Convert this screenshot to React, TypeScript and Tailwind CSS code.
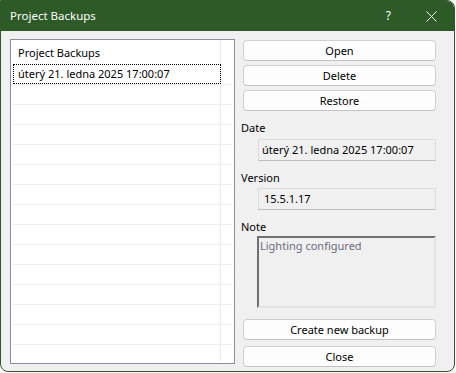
import React from 'react';

const font = { fontFamily: '"Segoe UI", "Noto Sans", "Open Sans", sans-serif' };

function DlgButton({ label, className = '' }: { label: string; className?: string }) {
  return (
    <button
      className={`h-[21px] w-[193px] rounded-[4px] border border-[#d0d0d0] border-b-[#c2c2c2] bg-[#fdfdfd] text-[11px] leading-none text-black ${className}`}
    >
      {label}
    </button>
  );
}

export default function App() {
  const rows = Array.from({ length: 15 }, (_, i) => i);

  return (
    <div className="h-[373px] w-[456px] bg-white" style={font}>
      <div className="flex h-[372px] w-[455px] flex-col overflow-hidden rounded-tr-[8px] rounded-b-[8px] border border-[#2d5a27] bg-[#f0f0f0]">
        {/* title bar */}
        <div className="flex h-[30px] shrink-0 items-center bg-[#2d5a27] pl-[9px] text-white">
          <span className="text-[11.5px]">Project Backups</span>
          <span className="ml-auto mr-[35px] text-[12px] leading-none">?</span>
          <svg width="11" height="11" viewBox="0 0 11 11" className="mr-[17px]">
            <path d="M0.5 0.5 L10.5 10.5 M10.5 0.5 L0.5 10.5" stroke="white" strokeWidth="1" />
          </svg>
        </div>

        <div className="flex pl-[9px] pt-[8px]">
          {/* backups list */}
          <div className="relative h-[325px] w-[225px] overflow-hidden border border-[#8e8c9c] bg-white px-[1px] pt-[1px] text-[11px] text-black">
            <div className="absolute bottom-[2px] left-[209px] top-0 w-[1px] bg-[#e6ebf2]" />
            <div className="flex h-[24px] items-center pl-[6px]">Project Backups</div>
            {rows.map((i) => (
              <div key={i} className="relative flex h-[20px] items-center border-b border-[#efefef] pl-[6px]">
                {i === 0 && (
                  <>
                    <div className="absolute -top-[1px] bottom-[0px] left-[1px] w-[208px] border border-dotted border-black" />
                    <span>úterý 21. ledna 2025 17:00:07</span>
                  </>
                )}
              </div>
            ))}
          </div>

          {/* right column */}
          <div className="ml-[6px] flex w-[196px] flex-col pt-[1px] text-[11px] text-black">
            <div className="ml-[2px] flex flex-col gap-[4px]">
              <DlgButton label="Open" />
              <DlgButton label="Delete" />
              <DlgButton label="Restore" />
            </div>

            <div className="mt-[9px] h-[16px] leading-[16px]">Date</div>
            <div className="ml-[17px] mt-[3px] flex h-[22px] w-[178px] items-center border border-[#dcdcdc] border-b-[#bdbdbd] bg-[#f0f0f0] pl-[3px]">
              úterý 21. ledna 2025 17:00:07
            </div>

            <div className="mt-[9px] h-[16px] leading-[16px]">Version</div>
            <div className="ml-[17px] mt-[2px] flex h-[22px] w-[178px] items-center border border-[#dcdcdc] border-b-[#bdbdbd] bg-[#f0f0f0] pl-[5px]">
              15.5.1.17
            </div>

            <div className="mt-[9px] h-[16px] leading-[16px]">Note</div>
            <div className="ml-[16px] mt-[1px] h-[72px] w-[179px] border-[2px] border-l-[#707070] border-t-[#707070] border-r-[#e3e3e3] border-b-[#e3e3e3] bg-[#f0f0f0] pl-[1px] text-[11px] leading-[16px] text-[#6e6a80]">
              Lighting configured
            </div>

            <div className="ml-[2px] mt-[11px] flex flex-col gap-[6px]">
              <DlgButton label="Create new backup" />
              <DlgButton label="Close" />
            </div>
          </div>
        </div>
      </div>
    </div>
  );
}
